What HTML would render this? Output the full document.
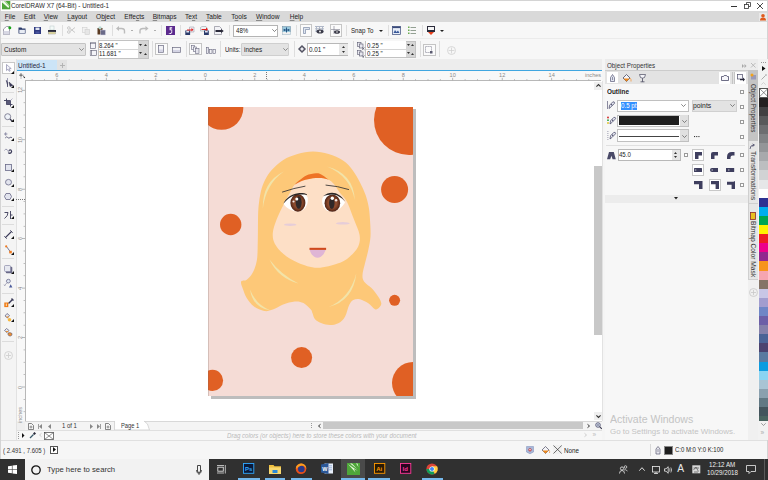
<!DOCTYPE html>
<html><head><meta charset="utf-8">
<style>
*{margin:0;padding:0;box-sizing:border-box}
html,body{width:768px;height:480px;overflow:hidden;background:#f0f0f0;font-family:"Liberation Sans",sans-serif;font-size:7px;color:#222;position:relative}
.a{position:absolute}
.t{position:absolute;white-space:nowrap;line-height:1}
svg{position:absolute;overflow:visible}
</style></head><body>
<div class="a" style="left:0px;top:0px;width:768px;height:11px;background:#fff;"></div>
<div class="a" style="left:0px;top:0px;width:768px;height:1px;background:#d4d4d4;"></div>
<div class="a" style="left:0px;top:0px;width:1px;height:459px;background:#d4d4d4;"></div>
<div class="a" style="left:767px;top:0px;width:1px;height:459px;background:#d4d4d4;"></div>
<svg style="left:1.7px;top:1.4px;" width="8.3" height="8.3" viewBox="0 0 8.3 8.3"><rect width="8.3" height="8.3" fill="#4ea63a"/><path d="M0,0 H2.2 L7.2,5.4 L6.4,7 L0.2,1.6Z" fill="#f2faee"/><path d="M2.4,0 H3.6 L7.6,4.4 L7.2,5.2Z" fill="#b8e0a8"/></svg>
<div class="t" style="left:11px;top:3.0px;font-size:6.5px;color:#2a2a2a;;transform:scaleX(0.964);transform-origin:0 0">CorelDRAW X7 (64-Bit) - Untitled-1</div>
<div class="a" style="left:731px;top:6px;width:6px;height:1px;background:#333;"></div>
<svg style="left:744px;top:2px;" width="7" height="7" viewBox="0 0 7 7"><rect x="0.5" y="2.5" width="4" height="4" fill="none" stroke="#333" stroke-width="0.8"/><path d="M2.5,2.5 V0.5 H6.5 V4.5 H4.5" fill="none" stroke="#333" stroke-width="0.8"/></svg>
<svg style="left:757px;top:2.5px;" width="6" height="6" viewBox="0 0 6 6"><path d="M0,0 L6,6 M6,0 L0,6" stroke="#333" stroke-width="0.9"/></svg>
<div class="a" style="left:1px;top:11px;width:766px;height:11px;background:#d9d9d9;"></div>
<div class="t" style="left:4.7px;top:13.9px;font-size:6.6px;color:#222;"><u style="text-decoration-thickness:0.5px;text-underline-offset:0.8px;text-decoration-color:#8a8a8a">F</u>ile</div>
<div class="t" style="left:24px;top:13.9px;font-size:6.6px;color:#222;"><u style="text-decoration-thickness:0.5px;text-underline-offset:0.8px;text-decoration-color:#8a8a8a">E</u>dit</div>
<div class="t" style="left:43.7px;top:13.9px;font-size:6.6px;color:#222;"><u style="text-decoration-thickness:0.5px;text-underline-offset:0.8px;text-decoration-color:#8a8a8a">V</u>iew</div>
<div class="t" style="left:67.3px;top:13.9px;font-size:6.6px;color:#222;"><u style="text-decoration-thickness:0.5px;text-underline-offset:0.8px;text-decoration-color:#8a8a8a">L</u>ayout</div>
<div class="t" style="left:96px;top:13.9px;font-size:6.6px;color:#222;">O<u style="text-decoration-thickness:0.5px;text-underline-offset:0.8px;text-decoration-color:#8a8a8a">b</u>ject</div>
<div class="t" style="left:124.3px;top:13.9px;font-size:6.6px;color:#222;">Effe<u style="text-decoration-thickness:0.5px;text-underline-offset:0.8px;text-decoration-color:#8a8a8a">c</u>ts</div>
<div class="t" style="left:152.7px;top:13.9px;font-size:6.6px;color:#222;"><u style="text-decoration-thickness:0.5px;text-underline-offset:0.8px;text-decoration-color:#8a8a8a">B</u>itmaps</div>
<div class="t" style="left:185px;top:13.9px;font-size:6.6px;color:#222;">Te<u style="text-decoration-thickness:0.5px;text-underline-offset:0.8px;text-decoration-color:#8a8a8a">x</u>t</div>
<div class="t" style="left:206px;top:13.9px;font-size:6.6px;color:#222;"><u style="text-decoration-thickness:0.5px;text-underline-offset:0.8px;text-decoration-color:#8a8a8a">T</u>able</div>
<div class="t" style="left:231.3px;top:13.9px;font-size:6.6px;color:#222;">T<u style="text-decoration-thickness:0.5px;text-underline-offset:0.8px;text-decoration-color:#8a8a8a">o</u>ols</div>
<div class="t" style="left:256px;top:13.9px;font-size:6.6px;color:#222;"><u style="text-decoration-thickness:0.5px;text-underline-offset:0.8px;text-decoration-color:#8a8a8a">W</u>indow</div>
<div class="t" style="left:289.7px;top:13.9px;font-size:6.6px;color:#222;"><u style="text-decoration-thickness:0.5px;text-underline-offset:0.8px;text-decoration-color:#8a8a8a">H</u>elp</div>
<svg style="left:759px;top:13px;" width="8" height="8" viewBox="0 0 8 8"><rect width="8" height="8" fill="#e8e8e8"/><circle cx="4" cy="2.8" r="1.8" fill="#e05a1c"/><path d="M1,7.5 Q1,4.6 4,4.6 Q7,4.6 7,7.5Z" fill="#e05a1c"/></svg>
<div class="a" style="left:1px;top:22px;width:766px;height:16px;background:#f7f7f7;"></div>
<div class="a" style="left:1px;top:38px;width:766px;height:0.8px;background:#ebebeb;"></div>
<svg style="left:3px;top:26px;" width="8" height="9" viewBox="0 0 8 9"><path d="M0.5,3 L3.5,0.5 H6.5 V8.5 H0.5Z" fill="#fff" stroke="#8a8a9a" stroke-width="0.8"/><rect x="0.5" y="5" width="6" height="3.5" fill="#d8d8e4"/><circle cx="6.8" cy="1.8" r="1.5" fill="#1aa31a"/></svg>
<svg style="left:18px;top:27px;" width="8" height="7" viewBox="0 0 8 7"><path d="M0.5,0.5 H3.5 L4.2,1.5 H7.5 V6.5 H0.5Z" fill="#2a3a6a"/><rect x="1.3" y="2.8" width="5.6" height="3.2" fill="#e8ecf4"/></svg>
<svg style="left:34px;top:27px;" width="7" height="7" viewBox="0 0 7 7"><rect x="0" y="0" width="7" height="7" fill="#2f3a80"/><rect x="1.5" y="0.6" width="4" height="2.4" fill="#dfe3f0"/><rect x="1.5" y="4.5" width="4" height="2" fill="#4a56a0"/></svg>
<svg style="left:48px;top:26px;" width="8" height="8" viewBox="0 0 8 8"><rect x="2" y="0" width="4" height="4" fill="#f4faf8" stroke="#b8c8c8" stroke-width="0.5"/><rect x="0" y="4" width="8" height="2" fill="#2a2a3a"/><rect x="0.5" y="6" width="7" height="2" fill="#e8e0a0" stroke="#8a8a8a" stroke-width="0.4"/></svg>
<div class="a" style="left:62px;top:25px;width:1px;height:11px;background:#dedede;"></div>
<svg style="left:67px;top:26px;" width="8" height="8" viewBox="0 0 8 8"><g fill="none" stroke="#c4c4c4" stroke-width="0.9"><circle cx="1.8" cy="6" r="1.3"/><circle cx="1.8" cy="2" r="1.3"/><path d="M3,2.6 L8,6.5 M3,5.4 L8,1.5"/></g></svg>
<svg style="left:82px;top:27px;" width="8" height="8" viewBox="0 0 8 8"><rect x="0.5" y="0.5" width="4.5" height="5" fill="#f2f2f2" stroke="#cfcfcf" stroke-width="0.6"/><rect x="3" y="2.5" width="4.5" height="5" fill="#e6e6e6" stroke="#cfcfcf" stroke-width="0.6"/></svg>
<svg style="left:97px;top:26px;" width="9" height="9" viewBox="0 0 9 9"><rect x="0.5" y="2" width="5" height="6.5" fill="#5a3a22"/><circle cx="3" cy="1.8" r="1.6" fill="#b8d8d0"/><rect x="3.5" y="4" width="5" height="5" fill="#6a6a88" stroke="#dcdcec" stroke-width="0.5"/></svg>
<div class="a" style="left:112px;top:25px;width:1px;height:11px;background:#dedede;"></div>
<svg style="left:116px;top:26px;" width="10" height="8" viewBox="0 0 10 8"><path d="M8.5,7.5 V5 Q8.5,2.5 5.5,2.5 H2" fill="none" stroke="#bcbcbc" stroke-width="1.4"/><path d="M0,2.5 L3,0 V5Z" fill="#bcbcbc"/></svg>
<div class="a" style="left:130.5px;top:29.5px;width:2px;height:1px;background:#b0b0b0;"></div>
<svg style="left:139px;top:26px;" width="10" height="8" viewBox="0 0 10 8"><path d="M1,7.5 V5 Q1,2.5 4,2.5 H7.5" fill="none" stroke="#bcbcbc" stroke-width="1.4"/><path d="M9.5,2.5 L6.5,0 V5Z" fill="#bcbcbc"/></svg>
<div class="a" style="left:153.5px;top:29.5px;width:2px;height:1px;background:#b0b0b0;"></div>
<div class="a" style="left:161px;top:25px;width:1px;height:11px;background:#dedede;"></div>
<svg style="left:166px;top:26px;" width="9" height="9" viewBox="0 0 9 9"><rect width="9" height="9" fill="#5c2a8e"/><path d="M6.2,1.2 H3.6 V4.2 H5.4 V6.6 L2.2,8 H4.8 L6.2,6.8 V3.4 H4.6 V2.4 H6.2Z" fill="#fff"/></svg>
<div class="a" style="left:180px;top:25px;width:1px;height:11px;background:#dedede;"></div>
<svg style="left:185px;top:26px;" width="10" height="9" viewBox="0 0 10 9"><path d="M4.5,1 H9 V6 H4.5Z" fill="#f0f0f4" stroke="#9090a0" stroke-width="0.5"/><rect x="0.3" y="4.5" width="4.8" height="4.5" fill="#2a3a6a"/><rect x="1.3" y="5" width="2.8" height="1.5" fill="#dfe3f0"/><path d="M2,3.5 H6.5 V2 L8.5,3.8 L6.5,5.6 V4.5 H2Z" fill="#e02020"/></svg>
<svg style="left:200px;top:26px;" width="9" height="9" viewBox="0 0 9 9"><path d="M0.5,1.5 L2,0.5 H6 L7,2 V5 H0.5Z" fill="#eef2f4" stroke="#8a9aa0" stroke-width="0.5"/><rect x="4" y="4.5" width="4.8" height="4.5" fill="#2a3a6a"/><rect x="5" y="5" width="2.8" height="1.5" fill="#dfe3f0"/><path d="M1.5,3 H6 V1.5 L8,3.3 L6,5.1 V4 H1.5Z" fill="#e02020"/></svg>
<svg style="left:214px;top:26px;" width="10" height="9" viewBox="0 0 10 9"><path d="M0.5,0.5 H5.5 L7.5,2.5 V8.5 H0.5Z" fill="#f2f2f6" stroke="#7a7a8a" stroke-width="0.6"/><path d="M1.5,4 H7 V3 L9.8,5 L7,7 V6 H1.5Z" fill="#2a2a3a"/></svg>
<div class="a" style="left:228.5px;top:25px;width:1px;height:11px;background:#dedede;"></div>
<div class="a" style="left:233px;top:24.5px;width:45px;height:12px;background:#fff;border:1px solid #b4b4b4"></div>
<div class="t" style="left:236px;top:27.8px;font-size:6.6px;color:#222;;transform:scaleX(0.924);transform-origin:0 0">48%</div>
<svg style="left:271.5px;top:28.5px;" width="5" height="3" viewBox="0 0 5 3"><path d="M0.3,0.3 L2.5,2.5 L4.7,0.3" fill="none" stroke="#555" stroke-width="0.7"/></svg>
<svg style="left:282px;top:26px;" width="9" height="9" viewBox="0 0 9 9"><rect x="0.5" y="0.5" width="8" height="8" fill="#9ac8dc" stroke="#6a8aa0" stroke-width="0.5"/><rect x="0.5" y="6" width="8" height="2.5" fill="#f0f0f0"/><path d="M1.5,4 H7.5 M4.5,1.5 V6.5" stroke="#1a4a7a" stroke-width="0.9"/><path d="M1.5,4 L3,3 V5Z M7.5,4 L6,3 V5Z" fill="#1a4a7a"/></svg>
<div class="a" style="left:296px;top:25px;width:1px;height:11px;background:#dedede;"></div>
<div class="a" style="left:300px;top:24px;width:12px;height:12.5px;background:#fbfbfb;border:1px solid #c6c6c6"></div>
<svg style="left:302.5px;top:26.5px;" width="7" height="7" viewBox="0 0 7 7"><path d="M0.5,6.5 V0.5 H6.5 V2.5 H2.5 V6.5Z" fill="#dfe6f0" stroke="#6a7a9a" stroke-width="0.6"/></svg>
<svg style="left:315px;top:26px;" width="10" height="9" viewBox="0 0 10 9"><g fill="#b0b8c8"><rect x="0" y="0" width="9" height="1"/><rect x="0" y="2.3" width="9" height="1"/><rect x="0" y="4.6" width="9" height="1"/><rect x="1" y="0" width="1" height="6"/><rect x="4" y="0" width="1" height="6"/><rect x="7" y="0" width="1" height="6"/></g><ellipse cx="5" cy="5.5" rx="3.5" ry="2" fill="#3a3a48"/><circle cx="5" cy="5.5" r="1" fill="#eee"/></svg>
<div class="a" style="left:329.5px;top:24px;width:12.5px;height:12.5px;background:#fbfbfb;border:1px solid #c6c6c6"></div>
<svg style="left:331px;top:26px;" width="10" height="9" viewBox="0 0 10 9"><path d="M3,0 V8 M0,3.5 H9" stroke="#7a7a8a" stroke-width="0.6"/><ellipse cx="6" cy="6" rx="3" ry="1.8" fill="#3a3a48"/><circle cx="6" cy="6" r="0.8" fill="#eee"/></svg>
<div class="a" style="left:345.5px;top:25px;width:1px;height:11px;background:#dedede;"></div>
<div class="t" style="left:350.6px;top:27.8px;font-size:6.6px;color:#222;;transform:scaleX(0.934);transform-origin:0 0">Snap To</div>
<svg style="left:378.5px;top:29.5px;" width="4" height="2" viewBox="0 0 4 2"><path d="M0,0 H4 L2,2Z" fill="#222"/></svg>
<div class="a" style="left:387.5px;top:25px;width:1px;height:11px;background:#dedede;"></div>
<svg style="left:392px;top:26px;" width="9" height="9" viewBox="0 0 9 9"><rect x="0.5" y="0.5" width="8" height="8" fill="#e8eef8" stroke="#3a4a7a" stroke-width="0.7"/><rect x="0.5" y="0.5" width="8" height="1.6" fill="#3a4a7a"/><path d="M1.5,7 L3,4 L4.5,6 L6,4.5 L7.5,7Z" fill="#3a5a9a"/></svg>
<svg style="left:408px;top:26px;" width="8" height="9" viewBox="0 0 8 9"><g fill="#6aaa50"><rect x="0" y="0.5" width="1.5" height="1.5"/><rect x="0" y="3.5" width="1.5" height="1.5"/><rect x="0" y="6.5" width="1.5" height="1.5"/></g><g fill="#7a8a7a"><rect x="2.5" y="1" width="5.5" height="0.8"/><rect x="2.5" y="4" width="5.5" height="0.8"/><rect x="2.5" y="7" width="5.5" height="0.8"/></g></svg>
<div class="a" style="left:421.5px;top:25px;width:1px;height:11px;background:#dedede;"></div>
<svg style="left:427px;top:26px;" width="8" height="9" viewBox="0 0 8 9"><rect x="0" y="0" width="8" height="6" fill="#2a2a3a"/><rect x="1" y="1" width="6" height="3" fill="#f4f4f4"/><path d="M1,6 L4,9 L7,6Z" fill="#e8401a"/></svg>
<svg style="left:439.5px;top:29.5px;" width="4" height="2" viewBox="0 0 4 2"><path d="M0,0 H4 L2,2Z" fill="#222"/></svg>
<div class="a" style="left:1px;top:39px;width:766px;height:20px;background:#f7f7f7;"></div>
<div class="a" style="left:1.2px;top:43px;width:84.4px;height:12.6px;background:#e3e3e3;border:1px solid #c4c4c4;border-radius:1px"></div>
<div class="t" style="left:3.5px;top:46.8px;font-size:6.6px;color:#222;;transform:scaleX(0.981);transform-origin:0 0">Custom</div>
<svg style="left:78.5px;top:48px;" width="5" height="3" viewBox="0 0 5 3"><path d="M0.3,0.3 L2.5,2.5 L4.7,0.3" fill="none" stroke="#666" stroke-width="0.7"/></svg>
<svg style="left:90px;top:41.5px;" width="6" height="7" viewBox="0 0 6 7"><rect x="0.5" y="1.2" width="5" height="5.3" fill="#f4f4f8" stroke="#5a5a70" stroke-width="0.6"/><path d="M0.5,0.3 V1.5 M5.5,0.3 V1.5 M0.5,0.6 H5.5" stroke="#5a5a70" stroke-width="0.5"/></svg>
<svg style="left:89.5px;top:50.3px;" width="7" height="6" viewBox="0 0 7 6"><rect x="1.5" y="0.5" width="5" height="5" fill="#f4f4f8" stroke="#5a5a70" stroke-width="0.6"/><path d="M0.4,0.5 V5.5 M0,0.5 H1 M0,5.5 H1" stroke="#5a5a70" stroke-width="0.5"/></svg>
<div class="a" style="left:97.5px;top:40.3px;width:51px;height:18.3px;background:#d6d6d6;border:1px solid #c2c2c2"></div>
<div class="a" style="left:98.5px;top:41.0px;width:39.5px;height:8.1px;background:#fff;"></div>
<div class="t" style="left:99.1px;top:42.7px;font-size:6.8px;color:#222;;transform:scaleX(0.875);transform-origin:0 0">8.264 "</div>
<svg style="left:139.2px;top:43.7px;" width="3" height="2" viewBox="0 0 3 2"><path d="M0,0 H3 L1.5,2Z" fill="#333"/></svg>
<svg style="left:143.7px;top:43.9px;" width="3" height="2" viewBox="0 0 3 2"><path d="M0,2 H3 L1.5,0Z" fill="#333"/></svg>
<div class="a" style="left:98.5px;top:49.7px;width:39.5px;height:8.1px;background:#fff;"></div>
<div class="t" style="left:99.1px;top:51.400000000000006px;font-size:6.8px;color:#222;;transform:scaleX(0.878);transform-origin:0 0">11.681 "</div>
<svg style="left:139.2px;top:52.400000000000006px;" width="3" height="2" viewBox="0 0 3 2"><path d="M0,0 H3 L1.5,2Z" fill="#333"/></svg>
<svg style="left:143.7px;top:52.6px;" width="3" height="2" viewBox="0 0 3 2"><path d="M0,2 H3 L1.5,0Z" fill="#333"/></svg>
<div class="a" style="left:151.5px;top:41px;width:1px;height:16px;background:#dedede;"></div>
<div class="a" style="left:155px;top:43.2px;width:12.5px;height:12.3px;background:#fbfbfb;border:1px solid #c4c4c4"></div>
<svg style="left:158px;top:45px;" width="6" height="8" viewBox="0 0 6 8"><rect x="0.5" y="0.5" width="5" height="7" fill="#f2f2f6" stroke="#6a6a80" stroke-width="0.7"/><rect x="1" y="4.5" width="4" height="2.6" fill="#d4d4e4"/></svg>
<svg style="left:171.5px;top:47px;" width="9" height="6" viewBox="0 0 9 6"><rect x="0.5" y="0.5" width="8" height="5" fill="#f2f2f6" stroke="#6a6a80" stroke-width="0.7"/><rect x="1" y="3" width="7" height="2.1" fill="#d4d4e4"/></svg>
<div class="a" style="left:185.5px;top:41px;width:1px;height:16px;background:#dedede;"></div>
<div class="a" style="left:189px;top:43.2px;width:12.5px;height:12.3px;background:#fbfbfb;border:1px solid #c4c4c4"></div>
<svg style="left:191px;top:44.5px;" width="9" height="9" viewBox="0 0 9 9"><rect x="0.5" y="0.5" width="3" height="4" fill="#f2f2f6" stroke="#6a6a80" stroke-width="0.6"/><rect x="2.5" y="2" width="3" height="4.5" fill="#f2f2f6" stroke="#6a6a80" stroke-width="0.6"/><rect x="4.5" y="3.5" width="3.5" height="5" fill="#e4e4ec" stroke="#6a6a80" stroke-width="0.6"/></svg>
<svg style="left:205.5px;top:46.5px;" width="10" height="7" viewBox="0 0 10 7"><rect x="0.5" y="0.5" width="2" height="6" fill="#e4e4ec" stroke="#6a6a80" stroke-width="0.6"/><rect x="3.5" y="2.5" width="2.5" height="4" fill="#f2f2f6" stroke="#6a6a80" stroke-width="0.6"/><rect x="7" y="2.5" width="2.5" height="4" fill="#f2f2f6" stroke="#6a6a80" stroke-width="0.6"/></svg>
<div class="a" style="left:220px;top:41px;width:1px;height:16px;background:#dedede;"></div>
<div class="t" style="left:224.6px;top:46.8px;font-size:6.6px;color:#222;;transform:scaleX(0.907);transform-origin:0 0">Units:</div>
<div class="a" style="left:241.4px;top:43px;width:48.1px;height:12.6px;background:#e3e3e3;border:1px solid #cfcfcf;border-radius:1px"></div>
<div class="t" style="left:243.8px;top:46.8px;font-size:6.6px;color:#222;;transform:scaleX(0.959);transform-origin:0 0">inches</div>
<svg style="left:283px;top:48px;" width="5" height="3" viewBox="0 0 5 3"><path d="M0.3,0.3 L2.5,2.5 L4.7,0.3" fill="none" stroke="#666" stroke-width="0.7"/></svg>
<div class="a" style="left:293.5px;top:41px;width:1px;height:16px;background:#dedede;"></div>
<svg style="left:297.5px;top:45px;" width="8" height="8" viewBox="0 0 8 8"><path d="M4,0 L8,4 L4,8 L0,4Z" fill="#4a4a5a"/><path d="M4,2 L6,4 L4,6 L2,4Z" fill="#ececf0"/><path d="M4,1.2 V2.4 M4,5.6 V6.8 M1.2,4 H2.4 M5.6,4 H6.8" stroke="#8a8a9a" stroke-width="0.5"/></svg>
<div class="a" style="left:307.2px;top:43px;width:41.3px;height:12.5px;background:#fff;border:1px solid #b8b8b8"></div>
<div class="a" style="left:339px;top:44px;width:8.5px;height:10.5px;background:#e8e8e8;"></div>
<div class="t" style="left:308.6px;top:46.8px;font-size:6.6px;color:#222;;transform:scaleX(0.963);transform-origin:0 0">0.01 "</div>
<svg style="left:341.8px;top:45.8px;" width="3" height="2" viewBox="0 0 3 2"><path d="M0,2 H3 L1.5,0Z" fill="#333"/></svg>
<svg style="left:341.8px;top:50.8px;" width="3" height="2" viewBox="0 0 3 2"><path d="M0,0 H3 L1.5,2Z" fill="#333"/></svg>
<div class="a" style="left:352.5px;top:41px;width:1px;height:16px;background:#dedede;"></div>
<svg style="left:356.5px;top:41.5px;" width="8" height="8" viewBox="0 0 8 8"><rect x="0.5" y="0.5" width="3.5" height="4" fill="#e8e8f0" stroke="#5a5a70" stroke-width="0.6"/><rect x="2.5" y="2" width="3.5" height="4" fill="#e8e8f0" stroke="#5a5a70" stroke-width="0.6"/><path d="M5,5.5 L7.5,7.8 M7.5,5.5 L5,7.8" stroke="#3a3a50" stroke-width="0.6"/></svg>
<svg style="left:356.5px;top:50px;" width="8" height="8" viewBox="0 0 8 8"><rect x="0.5" y="0.5" width="3.5" height="4" fill="#e8e8f0" stroke="#5a5a70" stroke-width="0.6"/><rect x="2.5" y="2" width="3.5" height="4" fill="#e8e8f0" stroke="#5a5a70" stroke-width="0.6"/><path d="M5,5.5 L6.2,6.8 L7.5,5.5 M6.2,6.8 V8" stroke="#3a3a50" stroke-width="0.6" fill="none"/></svg>
<div class="a" style="left:365px;top:40.6px;width:51px;height:17.7px;background:#d6d6d6;border:1px solid #c2c2c2"></div>
<div class="a" style="left:366px;top:41.300000000000004px;width:39.5px;height:7.799999999999999px;background:#fff;"></div>
<div class="t" style="left:366.6px;top:43.00000000000001px;font-size:6.8px;color:#222;;transform:scaleX(0.895);transform-origin:0 0">0.25 "</div>
<svg style="left:406.7px;top:44.00000000000001px;" width="3" height="2" viewBox="0 0 3 2"><path d="M0,0 H3 L1.5,2Z" fill="#333"/></svg>
<svg style="left:411.2px;top:44.2px;" width="3" height="2" viewBox="0 0 3 2"><path d="M0,2 H3 L1.5,0Z" fill="#333"/></svg>
<div class="a" style="left:366px;top:49.7px;width:39.5px;height:7.799999999999999px;background:#fff;"></div>
<div class="t" style="left:366.6px;top:51.400000000000006px;font-size:6.8px;color:#222;;transform:scaleX(0.895);transform-origin:0 0">0.25 "</div>
<svg style="left:406.7px;top:52.400000000000006px;" width="3" height="2" viewBox="0 0 3 2"><path d="M0,0 H3 L1.5,2Z" fill="#333"/></svg>
<svg style="left:411.2px;top:52.6px;" width="3" height="2" viewBox="0 0 3 2"><path d="M0,2 H3 L1.5,0Z" fill="#333"/></svg>
<div class="a" style="left:420px;top:41px;width:1px;height:16px;background:#dedede;"></div>
<div class="a" style="left:422.5px;top:43.5px;width:13px;height:12.5px;background:#fbfbfb;border:1px solid #c4c4c4"></div>
<svg style="left:425px;top:45.5px;" width="8" height="8" viewBox="0 0 8 8"><rect x="0.5" y="0.5" width="6" height="6" fill="none" stroke="#5a5a70" stroke-width="0.6" stroke-dasharray="1.2 0.8"/><rect x="5" y="5" width="2.5" height="2.5" fill="#5a5a70"/></svg>
<div class="a" style="left:439px;top:41px;width:1px;height:16px;background:#dedede;"></div>
<svg style="left:447px;top:45.5px;" width="9" height="9" viewBox="0 0 9 9"><circle cx="4.5" cy="4.5" r="4" fill="none" stroke="#d0d0d0" stroke-width="0.8"/><path d="M4.5,1.5 V7.5 M1.5,4.5 H7.5" stroke="#d0d0d0" stroke-width="0.8"/></svg>
<div class="a" style="left:1px;top:59px;width:766px;height:381px;background:#efefef;"></div>
<div class="a" style="left:1px;top:59px;width:15px;height:381px;background:#f4f4f4;"></div>
<div class="a" style="left:15.5px;top:59px;width:1px;height:381px;background:#e2e2e2;"></div>
<div class="a" style="left:2px;top:62.2px;width:12.5px;height:11.5px;background:#fff;border:1px solid #c8c8c8"></div>
<svg style="left:5.5px;top:64px;" width="6" height="7.5" viewBox="0 0 6 7.5"><path d="M0.5,0.5 L5.2,4.6 L3,4.8 L4.2,7 L3.2,7.3 L2,5.2 L0.5,6.6Z" fill="#f4f4fa" stroke="#8a8aaa" stroke-width="0.7"/></svg>
<svg style="left:11px;top:70.5px;" width="3" height="3" viewBox="0 0 3 3"><path d="M0,3 H3 V0Z" fill="#111"/></svg>
<svg style="left:4.5px;top:78px;" width="9" height="10" viewBox="0 0 9 10"><path d="M2.5,0 V9" stroke="#8a8aa8" stroke-width="0.8"/><path d="M1,2 Q3.5,4 2.5,9 M4,4 L8,7.5 L5,8.5Z" fill="#3a3a58" stroke="#3a3a58" stroke-width="0.5"/></svg>
<svg style="left:11px;top:85px;" width="3" height="3" viewBox="0 0 3 3"><path d="M0,3 H3 V0Z" fill="#111"/></svg>
<div class="a" style="left:2px;top:92px;width:12px;height:1px;background:#dcdcdc;"></div>
<svg style="left:4px;top:98px;" width="9" height="9" viewBox="0 0 9 9"><path d="M2.5,0.5 V6.5 H8.5 M0,2.5 H6.5 V8.5" fill="none" stroke="#3a3a58" stroke-width="0.9"/><path d="M3,6 L8.5,0.5" stroke="#8a8aa8" stroke-width="0.6"/><rect x="2.5" y="2.5" width="4" height="4" fill="#5a5a78"/></svg>
<svg style="left:11px;top:104.5px;" width="3" height="3" viewBox="0 0 3 3"><path d="M0,3 H3 V0Z" fill="#111"/></svg>
<svg style="left:4px;top:113px;" width="9" height="9" viewBox="0 0 9 9"><circle cx="3.7" cy="3.7" r="3" fill="#eef2f8" stroke="#7a7a90" stroke-width="0.9"/><path d="M6,6 L8.5,8.5" stroke="#3a3a50" stroke-width="1.3"/></svg>
<svg style="left:11px;top:119px;" width="3" height="3" viewBox="0 0 3 3"><path d="M0,3 H3 V0Z" fill="#111"/></svg>
<div class="a" style="left:2px;top:126px;width:12px;height:1px;background:#dcdcdc;"></div>
<svg style="left:4px;top:132px;" width="9" height="9" viewBox="0 0 9 9"><path d="M0,2 H3.4 M1.7,0.3 V3.7" stroke="#7a7a98" stroke-width="0.8"/><path d="M1.2,6 Q2.5,4 3.8,5.5 Q5,7 6,5.5 Q7,4.5 8,5.8" fill="none" stroke="#5a5a78" stroke-width="0.9"/></svg>
<svg style="left:11px;top:138px;" width="3" height="3" viewBox="0 0 3 3"><path d="M0,3 H3 V0Z" fill="#111"/></svg>
<svg style="left:4px;top:148px;" width="9" height="6.5" viewBox="0 0 9 6.5"><path d="M0.5,2.5 Q1.5,0.5 3,1.5 Q4,2.5 4.5,4" fill="none" stroke="#7a7a98" stroke-width="0.7"/><path d="M4.5,2.5 Q6,0.5 7.5,1.8 Q9,3.5 7.5,5.3 Q5.5,6.8 3.8,5 L4.6,4.2 Q6,5 6.8,4 Q7.4,3 6.5,2.6 Q5.5,2.3 5.2,3.4Z" fill="#3a3a58"/></svg>
<svg style="left:4.5px;top:163.5px;" width="7" height="7" viewBox="0 0 7 7"><rect x="0.5" y="0.5" width="6" height="6" fill="#e2e4ee" stroke="#6a6a88" stroke-width="0.8"/></svg>
<svg style="left:11px;top:168.5px;" width="3" height="3" viewBox="0 0 3 3"><path d="M0,3 H3 V0Z" fill="#111"/></svg>
<svg style="left:4.5px;top:179px;" width="7" height="7" viewBox="0 0 7 7"><ellipse cx="3.5" cy="3.2" rx="3" ry="2.8" fill="#e2e4ee" stroke="#6a6a88" stroke-width="0.8"/></svg>
<svg style="left:11px;top:184px;" width="3" height="3" viewBox="0 0 3 3"><path d="M0,3 H3 V0Z" fill="#111"/></svg>
<svg style="left:4px;top:192.5px;" width="8" height="7" viewBox="0 0 8 7"><path d="M2,0.5 H6 L7.5,3.5 L6,6.5 H2 L0.5,3.5Z" fill="#e2e4ee" stroke="#6a6a88" stroke-width="0.8"/></svg>
<svg style="left:11px;top:197.5px;" width="3" height="3" viewBox="0 0 3 3"><path d="M0,3 H3 V0Z" fill="#111"/></svg>
<div class="a" style="left:2px;top:205.8px;width:12px;height:1px;background:#dcdcdc;"></div>
<svg style="left:4px;top:210.5px;" width="9" height="9" viewBox="0 0 9 9"><path d="M0.5,1.5 H4 Q4,5 0.5,7.5 M6.5,0 V8 M6.5,4 H8.5" fill="none" stroke="#3a3a58" stroke-width="0.9"/></svg>
<svg style="left:11px;top:216px;" width="3" height="3" viewBox="0 0 3 3"><path d="M0,3 H3 V0Z" fill="#111"/></svg>
<div class="a" style="left:2px;top:224px;width:12px;height:1px;background:#dcdcdc;"></div>
<svg style="left:4px;top:230px;" width="9" height="9" viewBox="0 0 9 9"><path d="M1.5,7.5 L7.5,1.5" stroke="#3a3a58" stroke-width="1.1"/><path d="M0.3,6.3 L2.7,8.7 M6.3,0.3 L8.7,2.7" stroke="#3a3a58" stroke-width="0.9"/></svg>
<svg style="left:11px;top:236px;" width="3" height="3" viewBox="0 0 3 3"><path d="M0,3 H3 V0Z" fill="#111"/></svg>
<svg style="left:4px;top:245px;" width="9" height="10" viewBox="0 0 9 10"><path d="M2.5,1.5 L6.5,7" stroke="#5a5a78" stroke-width="0.8"/><circle cx="2.2" cy="1.4" r="1.1" fill="#f07a20"/><rect x="5.2" y="5.8" width="2.6" height="2.6" fill="#f07a20"/></svg>
<svg style="left:11px;top:252px;" width="3" height="3" viewBox="0 0 3 3"><path d="M0,3 H3 V0Z" fill="#111"/></svg>
<div class="a" style="left:2px;top:257.8px;width:12px;height:1px;background:#dcdcdc;"></div>
<svg style="left:4px;top:265px;" width="9" height="9" viewBox="0 0 9 9"><rect x="1.8" y="1.8" width="6.5" height="6.5" rx="1" fill="#6a6a88"/><rect x="0.5" y="0.5" width="6" height="6" rx="1" fill="#e6e8f0" stroke="#8a8aa8" stroke-width="0.7"/></svg>
<svg style="left:11px;top:271px;" width="3" height="3" viewBox="0 0 3 3"><path d="M0,3 H3 V0Z" fill="#111"/></svg>
<svg style="left:4px;top:279px;" width="9" height="9" viewBox="0 0 9 9"><path d="M4.5,0.3 Q6.5,0.3 6.3,2.3 Q6,4 4.3,4 Q2.6,4 2.4,2.3 Q2.4,0.3 4.5,0.3Z" fill="#dfe6f2" stroke="#5a5a80" stroke-width="0.7"/><path d="M3,3.8 L0.4,6.6 M0,5.6 L1.4,7" stroke="#7a7a98" stroke-width="0.6"/><path d="M5,8.5 L6.7,5.2 L8.4,8.5Z" fill="#4a5a9a"/></svg>
<div class="a" style="left:2px;top:293px;width:12px;height:1px;background:#dcdcdc;"></div>
<svg style="left:3.5px;top:297.5px;" width="10" height="10" viewBox="0 0 10 10"><path d="M4.5,5.5 L8.5,1.5" stroke="#3a3a58" stroke-width="1.5"/><path d="M7.5,0.5 L9.5,2.5" stroke="#3a3a58" stroke-width="1.2"/><rect x="0.3" y="4.5" width="4" height="4.6" fill="#f07a10"/><rect x="1.8" y="5.5" width="1" height="2.6" fill="#fde0c0"/></svg>
<svg style="left:11px;top:304px;" width="3" height="3" viewBox="0 0 3 3"><path d="M0,3 H3 V0Z" fill="#111"/></svg>
<svg style="left:4px;top:313px;" width="9" height="9" viewBox="0 0 9 9"><path d="M3,0.5 L5.5,2.5 L3.5,5 L1,3Z" fill="#e6e8f0" stroke="#5a5a78" stroke-width="0.7"/><path d="M2,3.5 H5 L3.5,5Z" fill="#f08a20"/><circle cx="5.5" cy="6.8" r="1.8" fill="#f6b840"/></svg>
<svg style="left:11px;top:319px;" width="3" height="3" viewBox="0 0 3 3"><path d="M0,3 H3 V0Z" fill="#111"/></svg>
<svg style="left:4px;top:328px;" width="9" height="9" viewBox="0 0 9 9"><path d="M2.5,0.5 L5,2.5 L3,4.5 L0.5,2.5Z" fill="#e6e8f0" stroke="#5a5a78" stroke-width="0.7"/><path d="M1.5,3 H4.5 L3,4.5Z" fill="#f08a20"/><path d="M4,5 Q6,4 8,5.5 Q8.5,7.5 6.5,8 Q4.5,8.3 4,6.5Z" fill="#f09030" stroke="#5a5a78" stroke-width="0.6"/></svg>
<div class="a" style="left:2px;top:341.2px;width:12px;height:1px;background:#dcdcdc;"></div>
<svg style="left:3.5px;top:351px;" width="9" height="9" viewBox="0 0 9 9"><circle cx="4.5" cy="4.5" r="4" fill="none" stroke="#d0d0d0" stroke-width="0.9"/><path d="M4.5,1.8 V7.2 M1.8,4.5 H7.2" stroke="#d0d0d0" stroke-width="0.9"/></svg>
<div class="a" style="left:16.5px;top:59px;width:586px;height:11.5px;background:#ededed;"></div>
<div class="a" style="left:16.5px;top:60.4px;width:40.3px;height:10px;background:#cce4f7;"></div>
<div class="t" style="left:17.6px;top:63.0px;font-size:6.9px;color:#1e1e40;;transform:scaleX(0.938);transform-origin:0 0">Untitled-1</div>
<div class="a" style="left:57px;top:60.4px;width:10px;height:10px;background:#e2e2e2;"></div>
<svg style="left:59.5px;top:62.5px;" width="5" height="5" viewBox="0 0 5 5"><path d="M2.5,0 V5 M0,2.5 H5" stroke="#b0b0b0" stroke-width="0.9"/></svg>
<div class="a" style="left:16.5px;top:70px;width:586px;height:1px;background:#41a6e0;"></div>
<div class="a" style="left:16.5px;top:71px;width:585px;height:10px;background:#f8f8f8;"></div>
<div class="a" style="left:16.5px;top:71px;width:8.8px;height:350px;background:#f8f8f8;"></div>
<div class="a" style="left:25px;top:80.3px;width:576px;height:0.8px;background:#b8b8b8;"></div>
<div class="a" style="left:24.8px;top:80.3px;width:0.8px;height:341px;background:#b8b8b8;"></div>
<svg style="left:18.5px;top:73px;" width="7" height="7" viewBox="0 0 7 7"><path d="M0,2.2 H4.5 M2,0 V4.5" stroke="#555" stroke-width="0.7"/><path d="M2,5 V6" stroke="#999" stroke-width="0.6"/><path d="M4,3 L6.2,4.2 L5.2,5.2Z" fill="#111"/><circle cx="2" cy="2.2" r="0.9" fill="#777"/></svg>
<svg style="left:0;top:0" width="768" height="480"><g fill="#a8a8a8"><rect x="31.7" y="79.2" width="0.8" height="1.2"/><rect x="44.1" y="79.2" width="0.8" height="1.2"/><rect x="56.5" y="77.8" width="0.8" height="2.6"/><rect x="68.8" y="79.2" width="0.8" height="1.2"/><rect x="81.2" y="79.2" width="0.8" height="1.2"/><rect x="93.6" y="79.2" width="0.8" height="1.2"/><rect x="105.9" y="77.8" width="0.8" height="2.6"/><rect x="118.3" y="79.2" width="0.8" height="1.2"/><rect x="130.7" y="79.2" width="0.8" height="1.2"/><rect x="143.1" y="79.2" width="0.8" height="1.2"/><rect x="155.4" y="77.8" width="0.8" height="2.6"/><rect x="167.8" y="79.2" width="0.8" height="1.2"/><rect x="180.2" y="79.2" width="0.8" height="1.2"/><rect x="192.5" y="79.2" width="0.8" height="1.2"/><rect x="204.9" y="77.8" width="0.8" height="2.6"/><rect x="217.3" y="79.2" width="0.8" height="1.2"/><rect x="229.6" y="79.2" width="0.8" height="1.2"/><rect x="242.0" y="79.2" width="0.8" height="1.2"/><rect x="254.4" y="77.8" width="0.8" height="2.6"/><rect x="266.8" y="79.2" width="0.8" height="1.2"/><rect x="279.1" y="79.2" width="0.8" height="1.2"/><rect x="291.5" y="79.2" width="0.8" height="1.2"/><rect x="303.9" y="77.8" width="0.8" height="2.6"/><rect x="316.2" y="79.2" width="0.8" height="1.2"/><rect x="328.6" y="79.2" width="0.8" height="1.2"/><rect x="341.0" y="79.2" width="0.8" height="1.2"/><rect x="353.3" y="77.8" width="0.8" height="2.6"/><rect x="365.7" y="79.2" width="0.8" height="1.2"/><rect x="378.1" y="79.2" width="0.8" height="1.2"/><rect x="390.5" y="79.2" width="0.8" height="1.2"/><rect x="402.8" y="77.8" width="0.8" height="2.6"/><rect x="415.2" y="79.2" width="0.8" height="1.2"/><rect x="427.6" y="79.2" width="0.8" height="1.2"/><rect x="439.9" y="79.2" width="0.8" height="1.2"/><rect x="452.3" y="77.8" width="0.8" height="2.6"/><rect x="464.7" y="79.2" width="0.8" height="1.2"/><rect x="477.0" y="79.2" width="0.8" height="1.2"/><rect x="489.4" y="79.2" width="0.8" height="1.2"/><rect x="501.8" y="77.8" width="0.8" height="2.6"/><rect x="514.1" y="79.2" width="0.8" height="1.2"/><rect x="526.5" y="79.2" width="0.8" height="1.2"/><rect x="538.9" y="79.2" width="0.8" height="1.2"/><rect x="551.3" y="77.8" width="0.8" height="2.6"/><rect x="563.6" y="79.2" width="0.8" height="1.2"/><rect x="576.0" y="79.2" width="0.8" height="1.2"/><rect x="588.4" y="79.2" width="0.8" height="1.2"/><rect x="23.6" y="411.3" width="1.3" height="0.8"/><rect x="23.6" y="399.0" width="1.3" height="0.8"/><rect x="22" y="386.6" width="3" height="0.8"/><rect x="23.6" y="374.2" width="1.3" height="0.8"/><rect x="23.6" y="361.9" width="1.3" height="0.8"/><rect x="23.6" y="349.5" width="1.3" height="0.8"/><rect x="22" y="337.2" width="3" height="0.8"/><rect x="23.6" y="324.8" width="1.3" height="0.8"/><rect x="23.6" y="312.4" width="1.3" height="0.8"/><rect x="23.6" y="300.1" width="1.3" height="0.8"/><rect x="22" y="287.7" width="3" height="0.8"/><rect x="23.6" y="275.3" width="1.3" height="0.8"/><rect x="23.6" y="263.0" width="1.3" height="0.8"/><rect x="23.6" y="250.6" width="1.3" height="0.8"/><rect x="22" y="238.2" width="3" height="0.8"/><rect x="23.6" y="225.9" width="1.3" height="0.8"/><rect x="23.6" y="213.5" width="1.3" height="0.8"/><rect x="23.6" y="201.2" width="1.3" height="0.8"/><rect x="22" y="188.8" width="3" height="0.8"/><rect x="23.6" y="176.4" width="1.3" height="0.8"/><rect x="23.6" y="164.1" width="1.3" height="0.8"/><rect x="23.6" y="151.7" width="1.3" height="0.8"/><rect x="22" y="139.3" width="3" height="0.8"/><rect x="23.6" y="127.0" width="1.3" height="0.8"/><rect x="23.6" y="114.6" width="1.3" height="0.8"/><rect x="23.6" y="102.3" width="1.3" height="0.8"/><rect x="22" y="89.9" width="3" height="0.8"/></g></svg>
<div class="t" style="left:55.3px;top:73.2px;font-size:5.6px;color:#8a8a8a;">6</div>
<div class="t" style="left:104.8px;top:73.2px;font-size:5.6px;color:#8a8a8a;">4</div>
<div class="t" style="left:154.3px;top:73.2px;font-size:5.6px;color:#8a8a8a;">2</div>
<div class="t" style="left:203.8px;top:73.2px;font-size:5.6px;color:#8a8a8a;">0</div>
<div class="t" style="left:253.2px;top:73.2px;font-size:5.6px;color:#8a8a8a;">2</div>
<div class="t" style="left:302.7px;top:73.2px;font-size:5.6px;color:#8a8a8a;">4</div>
<div class="t" style="left:352.2px;top:73.2px;font-size:5.6px;color:#8a8a8a;">6</div>
<div class="t" style="left:401.7px;top:73.2px;font-size:5.6px;color:#8a8a8a;">8</div>
<div class="t" style="left:449.6px;top:73.2px;font-size:5.6px;color:#8a8a8a;">10</div>
<div class="t" style="left:499.1px;top:73.2px;font-size:5.6px;color:#8a8a8a;">12</div>
<div class="t" style="left:548.6px;top:73.2px;font-size:5.6px;color:#8a8a8a;">14</div>
<div class="t" style="left:585px;top:73.2px;font-size:5.6px;color:#8a8a8a;">inches</div>
<div class="t" style="left:17.8px;top:93.4px;font-size:5.6px;color:#8a8a8a;transform:rotate(-90deg);transform-origin:0 0">12</div>
<div class="t" style="left:17.8px;top:142.8px;font-size:5.6px;color:#8a8a8a;transform:rotate(-90deg);transform-origin:0 0">10</div>
<div class="t" style="left:17.8px;top:190.8px;font-size:5.6px;color:#8a8a8a;transform:rotate(-90deg);transform-origin:0 0">8</div>
<div class="t" style="left:17.8px;top:240.2px;font-size:5.6px;color:#8a8a8a;transform:rotate(-90deg);transform-origin:0 0">6</div>
<div class="t" style="left:17.8px;top:289.7px;font-size:5.6px;color:#8a8a8a;transform:rotate(-90deg);transform-origin:0 0">4</div>
<div class="t" style="left:17.8px;top:339.1px;font-size:5.6px;color:#8a8a8a;transform:rotate(-90deg);transform-origin:0 0">2</div>
<div class="t" style="left:17.8px;top:388.6px;font-size:5.6px;color:#8a8a8a;transform:rotate(-90deg);transform-origin:0 0">0</div>
<div class="t" style="left:18px;top:423px;font-size:5.6px;color:#8a8a8a;transform:rotate(-90deg);transform-origin:0 0">inches</div>
<svg style="left:266px;top:72px;" width="1" height="8" viewBox="0 0 1 8"><path d="M0.5,0 V8" stroke="#555" stroke-width="0.8" stroke-dasharray="1 1"/></svg>
<div class="a" style="left:25.6px;top:81.1px;width:577px;height:339.9px;background:#fff;"></div>
<div class="a" style="left:211px;top:109px;width:204.8px;height:289.5px;background:#bdbdbd;"></div>
<svg style="left:16px;top:199px;" width="9" height="1" viewBox="0 0 9 1"><path d="M0,0.5 H9" stroke="#555" stroke-width="0.8" stroke-dasharray="1 1"/></svg>
<div class="a" style="left:208px;top:107px;width:205px;height:289px;background:#f5dcd6;overflow:hidden">
<svg width="205" height="289" viewBox="208 107 205 289" style="left:0;top:0"><g fill="#e06024">
<circle cx="221.5" cy="108" r="21.8"/>
<circle cx="409" cy="120" r="35"/>
<circle cx="394.6" cy="189.5" r="13.5"/>
<circle cx="230.7" cy="224.5" r="10.7"/>
<circle cx="394.6" cy="300.3" r="5.5"/>
<circle cx="301.6" cy="357.6" r="10.5"/>
<circle cx="212.5" cy="380.4" r="10.6"/>
<circle cx="413" cy="383" r="21"/>
</g><path d="M313.0,151.5 C318.2,151.5 323.6,152.6 328.6,154.1 C333.6,155.6 339.0,157.9 343.0,160.6 C347.0,163.2 349.7,166.3 352.5,170.0 C355.3,173.7 357.8,178.3 360.0,182.5 C362.2,186.7 364.1,190.8 365.6,195.0 C367.1,199.2 368.0,203.3 368.8,207.5 C369.5,211.7 369.7,215.2 370.0,220.0 C370.3,224.8 370.8,231.5 370.5,236.5 C370.2,241.5 369.2,245.5 368.3,250.0 C367.4,254.5 366.0,259.1 365.0,263.3 C364.0,267.5 362.6,271.9 362.5,275.0 C362.4,278.1 362.7,279.5 364.2,281.7 C365.7,283.9 369.3,285.8 371.7,288.3 C374.1,290.8 376.7,294.2 378.3,296.7 C379.9,299.2 381.2,301.5 381.3,303.3 C381.4,305.1 380.2,306.5 379.2,307.5 C378.1,308.5 376.8,309.9 375.0,309.2 C373.2,308.5 370.8,305.0 368.3,303.3 C365.8,301.6 362.5,299.8 360.0,299.2 C357.5,298.6 355.1,299.0 353.3,300.0 C351.5,301.0 350.6,302.2 349.2,305.0 C347.8,307.8 346.8,313.6 345.0,316.7 C343.2,319.8 340.8,321.9 338.3,323.3 C335.8,324.7 332.8,325.0 330.0,325.0 C327.2,325.0 324.2,324.3 321.7,323.3 C319.2,322.3 316.5,320.9 315.0,319.2 C313.5,317.5 313.2,314.9 312.5,313.3 C311.8,311.7 312.3,311.3 310.8,309.6 C309.3,307.9 306.2,304.4 303.5,303.0 C300.8,301.6 298.2,301.2 294.8,301.5 C291.4,301.8 286.8,303.1 283.1,304.5 C279.5,305.9 276.0,308.5 272.9,309.6 C269.8,310.7 267.3,311.5 264.2,311.0 C261.1,310.5 256.9,308.8 254.0,306.6 C251.1,304.4 248.5,300.8 246.7,297.9 C244.9,295.0 243.9,291.9 243.0,289.2 C242.1,286.5 240.5,283.2 241.1,281.6 C241.7,280.0 244.8,281.1 246.7,279.7 C248.6,278.3 250.8,276.4 252.5,273.1 C254.2,269.8 256.0,265.5 256.9,260.0 C257.8,254.5 257.6,246.7 257.8,240.0 C258.0,233.3 257.9,225.8 258.0,220.0 C258.1,214.2 258.2,209.7 258.7,205.0 C259.2,200.3 259.8,195.9 260.8,191.7 C261.9,187.5 263.2,183.6 265.0,180.0 C266.8,176.4 268.6,173.3 271.7,170.0 C274.8,166.7 279.0,162.7 283.3,160.0 C287.6,157.3 292.6,155.4 297.5,154.0 C302.4,152.6 307.8,151.5 313.0,151.5Z" fill="#fdc878"/>
<g fill="#f2e3a8"><path d="M283.8,171.5 Q266.0,184.0 262.8,208.5 Q262.2,181.8 283.8,171.5Z"/><path d="M327.0,166.5 Q350.0,176.0 354.8,200.0 Q353.4,173.2 327.0,166.5Z"/><path d="M269.5,259.5 Q278.0,278.0 298.5,283.5 Q280.8,274.6 269.5,259.5Z"/><path d="M250.0,289.5 Q256.0,305.0 270.5,310.5 Q252.9,308.1 250.0,289.5Z"/><path d="M356.3,273.2 Q350.0,298.0 328.5,307.0 Q353.4,300.8 356.3,273.2Z"/></g>
<path d="M294.9,184.5 C297.1,182.5 300.0,181.6 303.0,180.6 C306.0,179.6 309.8,178.7 312.8,178.3 C315.8,177.9 318.6,177.8 321.2,178.0 C323.9,178.2 326.2,178.5 328.4,179.6 C330.6,180.7 332.4,182.4 334.3,184.5 C336.2,186.6 337.5,189.6 339.5,192.3 C341.5,195.1 344.1,196.6 346.5,201.0 C348.9,205.4 351.6,213.3 353.8,219.0 C355.9,224.7 358.9,230.4 359.6,235.0 C360.3,239.6 359.8,243.0 358.1,246.7 C356.4,250.3 352.7,254.1 349.4,256.9 C346.1,259.7 343.6,261.5 338.3,263.3 C333.0,265.1 324.0,267.9 317.3,267.8 C310.6,267.7 303.6,265.0 298.0,262.7 C292.4,260.4 287.4,257.2 283.5,254.0 C279.6,250.8 276.6,247.2 274.8,243.8 C273.0,240.2 272.5,237.1 272.8,233.0 C273.1,228.9 274.9,223.9 276.8,219.0 C278.7,214.1 282.0,207.9 284.2,203.5 C286.4,199.1 288.2,195.7 290.0,192.5 C291.8,189.3 292.7,186.5 294.9,184.5Z" fill="#fddfc6"/>
<path d="M294.9,184.5 C294.4,184.4 297.9,181.5 299.8,180.0 C301.7,178.5 303.6,176.5 306.3,175.4 C309.0,174.3 313.5,173.5 316.0,173.3 C318.5,173.1 319.3,173.5 321.2,174.4 C323.2,175.3 326.6,178.1 327.8,179.0 C329.0,179.9 329.5,179.8 328.4,179.6 C327.3,179.4 323.9,178.2 321.2,178.0 C318.6,177.8 315.8,177.9 312.8,178.3 C309.8,178.7 306.0,179.6 303.0,180.6 C300.0,181.6 295.4,184.6 294.9,184.5Z" fill="#ee7326"/>
<g fill="none" stroke="#3d3a38" stroke-linecap="round">
<path d="M282.5,192 Q294,188 305,186.2" stroke-width="0.9"/>
<path d="M326,185.1 Q338,186 348.6,189.5" stroke-width="0.9"/>
</g>
<path d="M283.5,204 C287,197 292,194 298,193.8 C303,193.6 306,194.5 307.5,197 C308.5,201 307.5,207 303,210 C299,212 294,211.5 290,209.5 C287,208 285,206 283.5,204Z" fill="#fff"/>
<defs><radialGradient id="ir" cx="0.5" cy="0.5" r="0.5"><stop offset="0" stop-color="#8a4a2e"/><stop offset="0.55" stop-color="#8e4c2e"/><stop offset="0.8" stop-color="#6e3620"/><stop offset="1" stop-color="#4a2214"/></radialGradient></defs><ellipse cx="297.9" cy="202.9" rx="7.5" ry="8.8" fill="url(#ir)"/>
<ellipse cx="298.7" cy="202.5" rx="3" ry="6.3" fill="#302828"/>
<circle cx="296.8" cy="199.1" r="1.5" fill="#fff"/>
<circle cx="293.5" cy="201.5" r="1.1" fill="#f4e8e4"/>
<path d="M283.3,203.8 C286,198 291,194 298,193.2 C302,192.8 305,193.3 307,194.3 L306.8,195 C304,194.4 301,194.4 297.5,194.8 C292,195.6 288,198.6 283.3,203.8Z" fill="#2a2626"/>
<path d="M345,202.6 C342,197 337,194 331,193.8 C327,193.8 324,195 322.5,198 C321.5,202 322.5,207 326,210 C330,212.5 336,211.5 340,208.5 C342,207 344,204.5 345,202.6Z" fill="#fff"/>
<ellipse cx="332.35" cy="203.15" rx="7.8" ry="8.6" fill="url(#ir)"/>
<ellipse cx="331.8" cy="203" rx="2.7" ry="6" fill="#302828"/>
<circle cx="332.3" cy="198.3" r="1.7" fill="#fff"/>
<circle cx="336.1" cy="200.2" r="1.2" fill="#f4e8e4"/>
<path d="M323,196.3 C326,193.8 329,192.8 332,192.8 C337,192.8 341,195.6 345.2,201.5 C341,197.2 337,194.6 332,194.5 C329,194.5 326,195.2 323,196.3Z" fill="#2a2626"/>
<ellipse cx="290.2" cy="224.7" rx="6.25" ry="1.3" fill="#e6cdd8"/>
<ellipse cx="342.8" cy="223.3" rx="7" ry="1.3" fill="#e6cdd8"/>
<path d="M309.7,249.9 L325.6,249.9 C324,254.5 321,257.7 317.6,257.7 C314,257.7 311,254.5 309.7,249.9Z" fill="#dfb5d5"/>
<rect x="309.5" y="247.8" width="16.6" height="2.1" fill="#cf4a1f"/></svg></div>
<div class="a" style="left:208px;top:107px;width:0.7px;height:289px;background:rgba(120,100,95,0.25);"></div>
<div class="a" style="left:594px;top:81.1px;width:8.3px;height:340px;background:#fff;"></div>
<div class="a" style="left:594px;top:82.4px;width:7.8px;height:7.3px;background:#efefef;"></div>
<div class="a" style="left:594px;top:412px;width:7.8px;height:8px;background:#efefef;"></div>
<svg style="left:595.5px;top:84.3px;" width="5" height="3" viewBox="0 0 5 3"><path d="M0.4,2.6 L2.5,0.6 L4.6,2.6" fill="none" stroke="#333" stroke-width="1.1"/></svg>
<div class="a" style="left:594px;top:166px;width:8px;height:169px;background:#c8c8c8;"></div>
<svg style="left:595.5px;top:414.8px;" width="5" height="3" viewBox="0 0 5 3"><path d="M0.4,0.4 L2.5,2.4 L4.6,0.4" fill="none" stroke="#333" stroke-width="1.1"/></svg>
<div class="a" style="left:25px;top:421px;width:577px;height:9px;background:#f4f4f4;"></div>
<div class="a" style="left:25px;top:421px;width:577px;height:0.8px;background:#d8d8d8;"></div>
<svg style="left:27.5px;top:423px;" width="6" height="7" viewBox="0 0 6 7"><path d="M0.5,0.5 H3.5 L5.5,2.5 V6.5 H0.5Z" fill="#f8f8f8" stroke="#555" stroke-width="0.7"/><path d="M1.5,4 H4.5 M3,2.5 V5.5" stroke="#555" stroke-width="0.6"/></svg>
<svg style="left:37.5px;top:423.8px;" width="4" height="5" viewBox="0 0 4 5"><path d="M0.5,0 V5" stroke="#888" stroke-width="0.8"/><path d="M4,0 V5 L1,2.5Z" fill="#888"/></svg>
<svg style="left:47.5px;top:423.8px;" width="3" height="5" viewBox="0 0 3 5"><path d="M3,0 V5 L0,2.5Z" fill="#888"/></svg>
<div class="t" style="left:61.6px;top:423.4px;font-size:6.8px;color:#333;;transform:scaleX(0.876);transform-origin:0 0">1 of 1</div>
<svg style="left:89.5px;top:423.8px;" width="3" height="5" viewBox="0 0 3 5"><path d="M0,0 V5 L3,2.5Z" fill="#888"/></svg>
<svg style="left:97px;top:423.8px;" width="4" height="5" viewBox="0 0 4 5"><path d="M3.5,0 V5" stroke="#888" stroke-width="0.8"/><path d="M0,0 V5 L3,2.5Z" fill="#888"/></svg>
<svg style="left:105px;top:423px;" width="6" height="7" viewBox="0 0 6 7"><path d="M0.5,0.5 H3.5 L5.5,2.5 V6.5 H0.5Z" fill="#f8f8f8" stroke="#555" stroke-width="0.7"/><path d="M1.5,4 H4.5 M3,2.5 V5.5" stroke="#555" stroke-width="0.6"/></svg>
<svg style="left:113.5px;top:421px;" width="36" height="9.2" viewBox="0 0 36 9.2"><path d="M0.5,0 V9 H35.5 L33.5,3 L30,0" fill="#fff" stroke="#c8c8c8" stroke-width="0.7"/></svg>
<div class="t" style="left:121px;top:423.2px;font-size:6.8px;color:#333;;transform:scaleX(0.849);transform-origin:0 0">Page 1</div>
<svg style="left:311px;top:422.5px;" width="2" height="6" viewBox="0 0 2 6"><g fill="#999"><rect y="0" width="1" height="1"/><rect y="2" width="1" height="1"/><rect y="4" width="1" height="1"/></g></svg>
<svg style="left:317.5px;top:423.5px;" width="3" height="4" viewBox="0 0 3 4"><path d="M2.5,0.3 L0.5,2 L2.5,3.7" fill="none" stroke="#222" stroke-width="0.9"/></svg>
<div class="a" style="left:323.3px;top:421.8px;width:259.7px;height:7px;background:#c8c8c8;"></div>
<svg style="left:586.5px;top:423.5px;" width="3" height="4" viewBox="0 0 3 4"><path d="M0.5,0.3 L2.5,2 L0.5,3.7" fill="none" stroke="#222" stroke-width="0.9"/></svg>
<svg style="left:594.5px;top:421.5px;" width="7" height="7" viewBox="0 0 7 7"><circle cx="3" cy="3" r="2.3" fill="#dde6f4" stroke="#4a4a68" stroke-width="0.8"/><path d="M4.6,4.6 L6.8,6.8" stroke="#3a3a50" stroke-width="1.1"/><path d="M1.8,3 H4.2 M3,1.8 V4.2" stroke="#4a4a68" stroke-width="0.5"/></svg>
<div class="a" style="left:16.5px;top:430px;width:586px;height:10px;background:#f7f7f7;"></div>
<div class="a" style="left:16.5px;top:430px;width:586px;height:0.7px;background:#e0e0e0;"></div>
<div class="a" style="left:16.5px;top:439.5px;width:586px;height:0.7px;background:#e2e2e2;"></div>
<svg style="left:17.5px;top:432px;" width="1" height="7" viewBox="0 0 1 7"><g fill="#999"><rect y="0" width="1" height="1"/><rect y="2" width="1" height="1"/><rect y="4" width="1" height="1"/><rect y="6" width="1" height="1"/></g></svg>
<svg style="left:21.5px;top:432.5px;" width="3" height="5" viewBox="0 0 3 5"><path d="M0,0 V5 L2.5,2.5Z" fill="#111"/></svg>
<svg style="left:28.5px;top:431.5px;" width="7" height="7" viewBox="0 0 7 7"><path d="M1,6 L4.5,2.5" stroke="#3a5a6a" stroke-width="1.2"/><path d="M4,1.5 L5.5,0 L7,1.5 L5.5,3Z" fill="#2a2a3a"/></svg>
<svg style="left:38.5px;top:432.5px;" width="3" height="4" viewBox="0 0 3 4"><path d="M2.5,0.3 L0.5,2 L2.5,3.7" fill="none" stroke="#bbb" stroke-width="0.7"/></svg>
<svg style="left:44px;top:432px;" width="10" height="8" viewBox="0 0 10 8"><rect x="0.4" y="0.4" width="9.2" height="7.2" fill="#fff" stroke="#444" stroke-width="0.7"/><path d="M0.5,0.5 L9.5,7.5 M9.5,0.5 L0.5,7.5" stroke="#444" stroke-width="0.6"/></svg>
<div class="t" style="left:226.5px;top:432.6px;font-size:6.6px;color:#bababa;font-style:italic;transform:scaleX(0.930);transform-origin:0 0">Drag colors (or objects) here to store these colors with your document</div>
<svg style="left:584px;top:432.5px;" width="3" height="4" viewBox="0 0 3 4"><path d="M0.5,0.3 L2.5,2 L0.5,3.7" fill="none" stroke="#bbb" stroke-width="0.7"/></svg>
<div class="t" style="left:592.5px;top:432px;font-size:6.5px;color:#bbb;">»</div>
<div class="a" style="left:1px;top:440.3px;width:766px;height:18.5px;background:#f6f6f6;"></div>
<div class="a" style="left:1px;top:440.3px;width:766px;height:0.8px;background:#e0e0e0;"></div>
<div class="t" style="left:2.7px;top:446.9px;font-size:7.0px;color:#333;;transform:scaleX(0.856);transform-origin:0 0">( 2.491 , 7.605 )</div>
<div class="a" style="left:50px;top:445.8px;width:8px;height:8px;background:#fff;border:1px solid #555"></div>
<svg style="left:52.5px;top:447.3px;" width="3" height="5" viewBox="0 0 3 5"><path d="M0,0 V5 L3,2.5Z" fill="#111"/></svg>
<svg style="left:526px;top:446px;" width="8" height="8" viewBox="0 0 8 8"><path d="M0.5,0.5 H7.5 V6 L4,7.8 L0.5,6Z" fill="#a8b8d8" stroke="#7a8ab8" stroke-width="0.5"/><circle cx="4" cy="3.8" r="1.6" fill="#c03030"/><circle cx="4" cy="3.8" r="0.8" fill="#fff"/></svg>
<svg style="left:541px;top:446px;" width="9" height="8" viewBox="0 0 9 8"><path d="M1,4 L4.5,0.5 L8,4 L4.5,7.5Z" fill="#f4f4f8" stroke="#4a4a60" stroke-width="0.7"/><path d="M1.5,4.5 H7.5 L4.5,7.5Z" fill="#f28a1a"/><path d="M8,4 Q9,5.5 8.5,7" stroke="#f2a050" stroke-width="0.8" fill="none"/></svg>
<div class="a" style="left:552.8px;top:445px;width:9.2px;height:9px;background:#f0f0f0;"></div>
<svg style="left:552.8px;top:445px;" width="9.2" height="9" viewBox="0 0 9.2 9"><path d="M0.5,0.5 L8.7,8.5 M8.7,0.5 L0.5,8.5" stroke="#333" stroke-width="0.7"/></svg>
<div class="t" style="left:564px;top:447.2px;font-size:7.0px;color:#222;;transform:scaleX(0.896);transform-origin:0 0">None</div>
<div class="a" style="left:649.5px;top:444px;width:0.8px;height:12px;background:#d8d8d8;"></div>
<svg style="left:655px;top:445.5px;" width="6" height="9" viewBox="0 0 6 9"><path d="M3,0.5 L5,3 V8 H1 V3Z" fill="#e8e8f0" stroke="#5a5a70" stroke-width="0.7"/><path d="M3,3 V6" stroke="#5a5a70" stroke-width="0.6"/></svg>
<div class="a" style="left:664px;top:446px;width:9px;height:8.5px;background:#1e1e1e;border:0.7px solid #888"></div>
<div class="t" style="left:675px;top:447.4px;font-size:6.6px;color:#222;;transform:scaleX(0.904);transform-origin:0 0">C:0 M:0 Y:0 K:100</div>
<div class="a" style="left:602.3px;top:59px;width:2.5px;height:381px;background:#f5f5f5;"></div>
<div class="a" style="left:602.3px;top:81px;width:0.8px;height:340px;background:#e2e2e2;"></div>
<div class="a" style="left:604.8px;top:59px;width:153.7px;height:11.3px;background:#ececec;"></div>
<div class="t" style="left:606.8px;top:62.8px;font-size:6.5px;color:#333;;transform:scaleX(0.960);transform-origin:0 0">Object Properties</div>
<svg style="left:741.5px;top:63.5px;" width="5" height="4" viewBox="0 0 5 4"><path d="M0,0 V4 L2,2Z M2.5,0 V4 L4.5,2Z" fill="#a8a8a8"/></svg>
<svg style="left:750.5px;top:63px;" width="4.5" height="4.5" viewBox="0 0 4.5 4.5"><path d="M0,0 L4.5,4.5 M4.5,0 L0,4.5" stroke="#b0b0b0" stroke-width="0.8"/></svg>
<div class="a" style="left:604.8px;top:70.3px;width:143.2px;height:14.4px;background:#e3e3e3;border-top:0.8px solid #cccccc;border-bottom:1.3px solid #bcbcbc"></div>
<div class="a" style="left:606.5px;top:71.5px;width:11px;height:11.8px;background:#fff;"></div>
<svg style="left:609.5px;top:73.5px;" width="5" height="8" viewBox="0 0 5 8"><path d="M2.5,0.5 L4.5,3.5 V7.5 H0.5 V3.5Z" fill="#dfe3ee" stroke="#5a5a78" stroke-width="0.7"/><path d="M2.5,3 V6" stroke="#5a5a78" stroke-width="0.6"/></svg>
<svg style="left:622px;top:73.5px;" width="10" height="9" viewBox="0 0 10 9"><path d="M1,4 L4.5,0.5 L8,4 L4.5,7.5Z" fill="#f4f4f8" stroke="#4a4a60" stroke-width="0.8"/><path d="M1.5,4.5 H7.5 L4.5,7.5Z" fill="#f28a1a"/><path d="M8,4 Q9.5,5.5 9,7.5" stroke="#f2a050" stroke-width="0.9" fill="none"/></svg>
<svg style="left:638.5px;top:73.5px;" width="7" height="8.5" viewBox="0 0 7 8.5"><path d="M0.5,0.5 H6.5 L5.5,3.5 Q3.5,4.8 1.5,3.5Z" fill="#f4f4f8" stroke="#4a4a60" stroke-width="0.7"/><path d="M3.5,4.2 V7.8 M1.5,7.8 H5.5" stroke="#4a4a60" stroke-width="0.8"/></svg>
<div class="a" style="left:719px;top:71.5px;width:11.2px;height:12px;background:#fff;"></div>
<svg style="left:721px;top:74.5px;" width="8" height="6" viewBox="0 0 8 6"><path d="M0.5,1.5 H2.5 L3.2,0.5 H5.5 L6.2,1.5 H7.5 V5.5 H0.5Z" fill="#f6f6fa" stroke="#4a4a68" stroke-width="0.8"/></svg>
<div class="a" style="left:732px;top:71.5px;width:0.7px;height:12px;background:#c4c4c4;"></div>
<div class="a" style="left:733.5px;top:71.5px;width:0.7px;height:12px;background:#c4c4c4;"></div>
<div class="a" style="left:735px;top:71.5px;width:11px;height:12px;background:#fff;"></div>
<svg style="left:736.5px;top:73.5px;" width="8" height="8" viewBox="0 0 8 8"><rect x="0.5" y="0.5" width="5" height="4.5" fill="#f6f6fa" stroke="#4a4a68" stroke-width="0.7"/><path d="M3,5 H6 V3.5 L8,5.5 L6,7.5 V6.3 H3Z" fill="#2a2a3a"/></svg>
<div class="a" style="left:604.8px;top:84.4px;width:143.2px;height:355.6px;background:#f7f7f7;"></div>
<div class="t" style="left:607px;top:88.6px;font-size:6.5px;color:#222;font-weight:bold;transform:scaleX(0.983);transform-origin:0 0">Outline</div>
<div class="a" style="left:740.2px;top:89.5px;width:4px;height:4px;background:#fff;border:0.7px solid #9a9a9a"></div>
<div class="a" style="left:740.2px;top:104.5px;width:4px;height:4px;background:#fff;border:0.7px solid #9a9a9a"></div>
<div class="a" style="left:740.2px;top:119.5px;width:4px;height:4px;background:#fff;border:0.7px solid #9a9a9a"></div>
<div class="a" style="left:740.2px;top:134.5px;width:4px;height:4px;background:#fff;border:0.7px solid #9a9a9a"></div>
<div class="a" style="left:740.2px;top:153px;width:4px;height:4px;background:#fff;border:0.7px solid #9a9a9a"></div>
<div class="a" style="left:740.2px;top:168px;width:4px;height:4px;background:#fff;border:0.7px solid #9a9a9a"></div>
<div class="a" style="left:740.2px;top:183px;width:4px;height:4px;background:#fff;border:0.7px solid #9a9a9a"></div>
<div class="a" style="left:684px;top:153px;width:4px;height:4px;background:#fff;border:0.7px solid #9a9a9a"></div>
<svg style="left:607px;top:101px;" width="8" height="8" viewBox="0 0 8 8"><path d="M0.5,0 V8" stroke="#5a5a78" stroke-width="0.7"/><path d="M2,7.5 L2.6,4.2 L5.8,0.9 Q7.6,0.3 7.6,2.2 L4.4,5.6Z" fill="#e6e8f2" stroke="#4a4a68" stroke-width="0.75"/><circle cx="4.6" cy="3.8" r="0.7" fill="#4a4a68"/></svg>
<div class="a" style="left:617.3px;top:99.6px;width:71.5px;height:12.4px;background:#fff;border:1px solid #c0c0c0"></div>
<div class="a" style="left:620.8px;top:102px;width:16.5px;height:7.5px;background:#3390ff;"></div>
<div class="t" style="left:621px;top:103.2px;font-size:6.8px;color:#fff;;transform:scaleX(0.911);transform-origin:0 0">0.5 pt</div>
<svg style="left:680.5px;top:104.3px;" width="5" height="3" viewBox="0 0 5 3"><path d="M0.3,0.3 L2.5,2.5 L4.7,0.3" fill="none" stroke="#555" stroke-width="0.7"/></svg>
<div class="a" style="left:691.8px;top:99.8px;width:45px;height:12px;background:#e3e3e3;border:1px solid #d0d0d0"></div>
<div class="t" style="left:693.3px;top:103.2px;font-size:6.8px;color:#222;;transform:scaleX(1.003);transform-origin:0 0">points</div>
<svg style="left:729.5px;top:104.3px;" width="5" height="3" viewBox="0 0 5 3"><path d="M0.3,0.3 L2.5,2.5 L4.7,0.3" fill="none" stroke="#555" stroke-width="0.7"/></svg>
<svg style="left:606.5px;top:115.5px;" width="9" height="9" viewBox="0 0 9 9"><circle cx="1" cy="1.5" r="0.9" fill="#d02020"/><circle cx="1" cy="4.2" r="0.9" fill="#20a040"/><circle cx="1" cy="7" r="0.9" fill="#e0c020"/><path d="M3,8 L3.6,4.7 L6.8,1.4 Q8.6,0.8 8.6,2.7 L5.4,6.1Z" fill="#e6e8f2" stroke="#4a4a68" stroke-width="0.75"/><circle cx="5.6" cy="4.3" r="0.7" fill="#4a4a68"/></svg>
<div class="a" style="left:617.3px;top:114.5px;width:71.5px;height:12.2px;background:#fff;border:1px solid #c0c0c0"></div>
<div class="a" style="left:619px;top:115.8px;width:59.5px;height:9.3px;background:#1e1e1e;"></div>
<div class="a" style="left:679.5px;top:115.2px;width:8.7px;height:11px;background:#e0e0e0;"></div>
<svg style="left:681.5px;top:119.8px;" width="5" height="3" viewBox="0 0 5 3"><path d="M0.3,0.3 L2.5,2.5 L4.7,0.3" fill="none" stroke="#555" stroke-width="0.7"/></svg>
<svg style="left:606.5px;top:130.5px;" width="9" height="9" viewBox="0 0 9 9"><g fill="#6a6a88"><rect x="0.5" y="0" width="0.8" height="0.8"/><rect x="0.5" y="2" width="0.8" height="0.8"/><rect x="0.5" y="4" width="0.8" height="0.8"/><rect x="0.5" y="6" width="0.8" height="0.8"/><rect x="0.5" y="8" width="0.8" height="0.8"/></g><path d="M3,8 L3.6,4.7 L6.8,1.4 Q8.6,0.8 8.6,2.7 L5.4,6.1Z" fill="#e6e8f2" stroke="#4a4a68" stroke-width="0.75"/><circle cx="5.6" cy="4.3" r="0.7" fill="#4a4a68"/></svg>
<div class="a" style="left:617.3px;top:129.4px;width:71.5px;height:12.3px;background:#fff;border:1px solid #c0c0c0"></div>
<div class="a" style="left:619px;top:136px;width:59.5px;height:0.9px;background:#444;"></div>
<div class="a" style="left:679.5px;top:130.2px;width:8.7px;height:11px;background:#e0e0e0;"></div>
<svg style="left:681.5px;top:134.8px;" width="5" height="3" viewBox="0 0 5 3"><path d="M0.3,0.3 L2.5,2.5 L4.7,0.3" fill="none" stroke="#555" stroke-width="0.7"/></svg>
<svg style="left:694.3px;top:136.3px;" width="6" height="1.2" viewBox="0 0 6 1.2"><g fill="#333"><rect x="0" width="1.1" height="1.1"/><rect x="2.2" width="1.1" height="1.1"/><rect x="4.4" width="1.1" height="1.1"/></g></svg>
<div class="a" style="left:606px;top:145px;width:139px;height:0.8px;background:#e0e0e0;"></div>
<svg style="left:607px;top:151.5px;" width="8.8" height="7.2" viewBox="0 0 8.8 7.2"><path d="M0,7.2 L2,0 H6.8 L8.8,7.2 H5.6 L4.4,3.8 L3.2,7.2Z" fill="#4a4a68"/></svg>
<div class="a" style="left:617.6px;top:149.3px;width:63.1px;height:11.3px;background:#fff;border:1px solid #b8b8b8"></div>
<div class="a" style="left:671.8px;top:150.2px;width:8px;height:9.5px;background:#e6e6e6;"></div>
<div class="t" style="left:618.5px;top:152px;font-size:6.8px;color:#222;;transform:scaleX(0.892);transform-origin:0 0">45.0</div>
<svg style="left:674.3px;top:151.5px;" width="3" height="2" viewBox="0 0 3 2"><path d="M0,2 H3 L1.5,0Z" fill="#333"/></svg>
<svg style="left:674.3px;top:156.3px;" width="3" height="2" viewBox="0 0 3 2"><path d="M0,0 H3 L1.5,2Z" fill="#333"/></svg>
<div class="a" style="left:691.6px;top:149px;width:12px;height:11.5px;background:#fff;border:0.8px solid #c8c8c8"></div>
<svg style="left:694.5px;top:151.5px;" width="7" height="7" viewBox="0 0 7 7"><path d="M0,0 H7 V3.5 H3.5 V7 H0Z" fill="#3e3e5e"/></svg>
<svg style="left:710.5px;top:151.5px;" width="7" height="7" viewBox="0 0 7 7"><path d="M2,0 H7 V3.5 H3.5 V7 H0 V2Q0,0 2,0Z" fill="#3e3e5e"/></svg>
<svg style="left:726.5px;top:151.5px;" width="7.5" height="7" viewBox="0 0 7.5 7"><path d="M5,0 H7.5 V3.5 H5.5 Q3.5,3.5 3.5,5.5 V7 H0 V5 Q0,0 5,0Z" fill="#3e3e5e"/></svg>
<div class="a" style="left:691.6px;top:164px;width:12px;height:11.5px;background:#fff;border:0.8px solid #c8c8c8"></div>
<svg style="left:694px;top:167.5px;" width="8" height="4" viewBox="0 0 8 4"><rect x="0" y="0" width="8" height="4" rx="0.5" fill="#3e3e5e"/><rect x="0.8" y="1.6" width="1.5" height="0.8" fill="#e8e8ee"/></svg>
<svg style="left:710px;top:167.5px;" width="8" height="4" viewBox="0 0 8 4"><path d="M2,0 H8 V4 H2 Q0,4 0,2 Q0,0 2,0Z" fill="#3e3e5e"/><rect x="1.5" y="1.6" width="1.5" height="0.8" fill="#e8e8ee"/></svg>
<svg style="left:726px;top:167.5px;" width="8.2" height="4" viewBox="0 0 8.2 4"><rect x="0" y="0" width="8.2" height="4" fill="#3e3e5e"/><rect x="2" y="1.6" width="1.5" height="0.8" fill="#e8e8ee"/></svg>
<svg style="left:693.5px;top:180.5px;" width="8.5" height="8" viewBox="0 0 8.5 8"><path d="M0,0 H8.5 V8 H5 V3.3 H0Z" fill="#3e3e5e"/></svg>
<div class="a" style="left:708.5px;top:178.5px;width:12px;height:12px;background:#fff;border:0.8px solid #c8c8c8"></div>
<svg style="left:710.5px;top:180.5px;" width="8" height="8" viewBox="0 0 8 8"><path d="M0,0 H8 V8 H4.6 V3.3 H0Z" fill="#3e3e5e"/></svg>
<svg style="left:726.5px;top:180.5px;" width="8" height="8" viewBox="0 0 8 8"><path d="M0,0.8 H6.5 L8,0 V8 H4.6 V3.8 H0Z" fill="#3e3e5e"/></svg>
<div class="a" style="left:605.2px;top:194.8px;width:142.8px;height:7.8px;background:#ececec;"></div>
<svg style="left:674.2px;top:197.2px;" width="4" height="2.3" viewBox="0 0 4 2.3"><path d="M0,0 H4 L2,2.5Z" fill="#222"/></svg>
<div class="t" style="left:609.7px;top:415.2px;font-size:10.2px;color:#c4c4c4;;transform:scaleX(1.035);transform-origin:0 0">Activate Windows</div>
<div class="t" style="left:609.7px;top:428.3px;font-size:7.3px;color:#c4c4c4;;transform:scaleX(1.086);transform-origin:0 0">Go to Settings to activate Windows.</div>
<div class="a" style="left:747.7px;top:70.3px;width:10.5px;height:369.7px;background:#f0f0f0;"></div>
<div class="a" style="left:747.7px;top:70.3px;width:10.3px;height:71.3px;background:#c4c4c4;"></div>
<div class="t" style="left:756.2px;top:83.8px;font-size:6.5px;color:#333;transform:rotate(90deg) scaleX(0.964);transform-origin:0 0">Object Properties</div>
<svg style="left:749.5px;top:72.5px;" width="7" height="7" viewBox="0 0 7 7"><rect x="1" y="2" width="5" height="4.5" fill="#9a9ab8"/><circle cx="2" cy="2" r="1.5" fill="#f2a21a"/></svg>
<div class="a" style="left:747.7px;top:141.4px;width:10.3px;height:62.8px;background:#e6e6e6;border-left:0.7px solid #cfcfcf;border-bottom:0.7px solid #cfcfcf"></div>
<svg style="left:749.2px;top:143.8px;" width="7" height="6" viewBox="0 0 7 6"><path d="M1,5 Q1,1 5,1 M3.5,0 L5.5,1 L3.5,2.5" fill="none" stroke="#4a4a68" stroke-width="0.8"/></svg>
<div class="t" style="left:756.2px;top:150.5px;font-size:6.5px;color:#333;transform:rotate(90deg) scaleX(1.053);transform-origin:0 0">Transformations</div>
<div class="a" style="left:747.7px;top:204.2px;width:10.3px;height:76px;background:#e6e6e6;border-left:0.7px solid #cfcfcf;border-bottom:0.7px solid #cfcfcf"></div>
<svg style="left:749.8px;top:212.3px;" width="6" height="8" viewBox="0 0 6 8"><rect x="0.5" y="0.5" width="5" height="7" fill="#e8c020" stroke="#8a2a2a" stroke-width="0.8"/></svg>
<div class="t" style="left:756.2px;top:220.8px;font-size:6.5px;color:#333;transform:rotate(90deg) scaleX(1.024);transform-origin:0 0">Bitmap Color Mask</div>
<svg style="left:748.5px;top:288px;" width="9" height="9" viewBox="0 0 9 9"><circle cx="4.5" cy="4.5" r="4" fill="none" stroke="#c8c8c8" stroke-width="0.8"/><path d="M4.5,1.8 V7.2 M1.8,4.5 H7.2" stroke="#c8c8c8" stroke-width="0.8"/></svg>
<div class="a" style="left:758.3px;top:59px;width:9.7px;height:381px;background:#f2f2f2;"></div>
<svg style="left:761px;top:61.5px;" width="5" height="1" viewBox="0 0 5 1"><g fill="#999"><rect x="0" width="1" height="1"/><rect x="2" width="1" height="1"/><rect x="4" width="1" height="1"/></g></svg>
<svg style="left:761.5px;top:65.8px;" width="3.5" height="5" viewBox="0 0 3.5 5"><path d="M0,0 V5 L3.5,2.5Z" fill="#111"/></svg>
<svg style="left:760.5px;top:73.5px;" width="6" height="6" viewBox="0 0 6 6"><path d="M0.5,5.5 L4.5,1.5" stroke="#aaa" stroke-width="1"/><path d="M4,1 L5,0 L6,1 L5,2Z" fill="#aaa"/></svg>
<svg style="left:761px;top:82px;" width="5" height="3" viewBox="0 0 5 3"><path d="M0.3,2.7 L2.5,0.5 L4.7,2.7" fill="none" stroke="#c4c4c4" stroke-width="0.7"/></svg>
<div class="a" style="left:758.5px;top:88.4px;width:9.5px;height:9.2px;background:#fff;border:0.7px solid #555"></div>
<svg style="left:758.5px;top:88.4px;" width="9.5" height="9.2" viewBox="0 0 9.5 9.2"><path d="M0.5,0.5 L9,8.7 M9,0.5 L0.5,8.7" stroke="#444" stroke-width="0.6"/></svg>
<div class="a" style="left:758.5px;top:97.6px;width:9.5px;height:9.4px;background:#231f20;"></div>
<div class="a" style="left:758.5px;top:106.7px;width:9.5px;height:9.4px;background:#414042;"></div>
<div class="a" style="left:758.5px;top:115.8px;width:9.5px;height:9.4px;background:#58595b;"></div>
<div class="a" style="left:758.5px;top:124.9px;width:9.5px;height:9.4px;background:#6d6e71;"></div>
<div class="a" style="left:758.5px;top:134.0px;width:9.5px;height:9.4px;background:#808285;"></div>
<div class="a" style="left:758.5px;top:143.1px;width:9.5px;height:9.4px;background:#939598;"></div>
<div class="a" style="left:758.5px;top:152.2px;width:9.5px;height:9.4px;background:#a7a9ac;"></div>
<div class="a" style="left:758.5px;top:161.3px;width:9.5px;height:9.4px;background:#bcbec0;"></div>
<div class="a" style="left:758.5px;top:170.4px;width:9.5px;height:9.4px;background:#d1d3d4;"></div>
<div class="a" style="left:758.5px;top:179.5px;width:9.5px;height:9.4px;background:#e6e7e8;"></div>
<div class="a" style="left:758.5px;top:188.6px;width:9.5px;height:9.4px;background:#ffffff;"></div>
<div class="a" style="left:758.5px;top:197.7px;width:9.5px;height:9.4px;background:#2e3192;"></div>
<div class="a" style="left:758.5px;top:206.8px;width:9.5px;height:9.4px;background:#00aeef;"></div>
<div class="a" style="left:758.5px;top:215.9px;width:9.5px;height:9.4px;background:#00a651;"></div>
<div class="a" style="left:758.5px;top:225.0px;width:9.5px;height:9.4px;background:#fff200;"></div>
<div class="a" style="left:758.5px;top:234.1px;width:9.5px;height:9.4px;background:#ed1c24;"></div>
<div class="a" style="left:758.5px;top:243.2px;width:9.5px;height:9.4px;background:#ec008c;"></div>
<div class="a" style="left:758.5px;top:252.3px;width:9.5px;height:9.4px;background:#92278f;"></div>
<div class="a" style="left:758.5px;top:261.4px;width:9.5px;height:9.4px;background:#f7941d;"></div>
<div class="a" style="left:758.5px;top:270.5px;width:9.5px;height:9.4px;background:#f6a5b0;"></div>
<div class="a" style="left:758.5px;top:279.6px;width:9.5px;height:9.4px;background:#857467;"></div>
<div class="a" style="left:758.5px;top:288.7px;width:9.5px;height:9.4px;background:#c8c6e6;"></div>
<div class="a" style="left:758.5px;top:297.8px;width:9.5px;height:9.4px;background:#a29dcf;"></div>
<div class="a" style="left:758.5px;top:306.9px;width:9.5px;height:9.4px;background:#6f86c6;"></div>
<div class="a" style="left:758.5px;top:316.0px;width:9.5px;height:9.4px;background:#6c5fa7;"></div>
<div class="a" style="left:758.5px;top:325.1px;width:9.5px;height:9.4px;background:#8480aa;"></div>
<div class="a" style="left:758.5px;top:334.2px;width:9.5px;height:9.4px;background:#4a6396;"></div>
<div class="a" style="left:758.5px;top:343.3px;width:9.5px;height:9.4px;background:#4b4370;"></div>
<div class="a" style="left:758.5px;top:352.4px;width:9.5px;height:9.4px;background:#5a7aa0;"></div>
<div class="a" style="left:758.5px;top:361.5px;width:9.5px;height:9.4px;background:#0d9ce0;"></div>
<div class="a" style="left:758.5px;top:370.6px;width:9.5px;height:9.4px;background:#8ad4f2;"></div>
<div class="a" style="left:758.5px;top:379.7px;width:9.5px;height:9.4px;background:#a8c4d4;"></div>
<div class="a" style="left:758.5px;top:388.8px;width:9.5px;height:9.4px;background:#8aa0ae;"></div>
<div class="a" style="left:758.5px;top:397.9px;width:9.5px;height:9.4px;background:#617883;"></div>
<div class="a" style="left:758.5px;top:407.0px;width:9.5px;height:9.4px;background:#43545c;"></div>
<div class="a" style="left:758.5px;top:416.1px;width:9.5px;height:5.2px;background:#4a6460;"></div>
<svg style="left:761px;top:422.5px;" width="5" height="3" viewBox="0 0 5 3"><path d="M0.3,0.3 L2.5,2.5 L4.7,0.3" fill="none" stroke="#777" stroke-width="0.7"/></svg>
<div class="t" style="left:760.5px;top:429.5px;font-size:6.5px;color:#aaa;">»</div>
<div class="a" style="left:0px;top:458.9px;width:768px;height:21.1px;background:#303030;"></div>
<svg style="left:8px;top:465px;" width="9" height="9" viewBox="0 0 9 9"><g fill="#fff"><path d="M0,1.3 L3.9,0.7 V4.2 H0Z"/><path d="M4.5,0.6 L9,0 V4.2 H4.5Z"/><path d="M0,4.8 H3.9 V8.3 L0,7.7Z"/><path d="M4.5,4.8 H9 V9 L4.5,8.4Z"/></g></svg>
<div class="a" style="left:25.4px;top:458.9px;width:183.5px;height:21.1px;background:#f2f2f2;"></div>
<svg style="left:31px;top:465px;" width="10" height="10" viewBox="0 0 10 10"><circle cx="5" cy="5" r="4.2" fill="none" stroke="#111" stroke-width="1.3"/></svg>
<div class="t" style="left:47px;top:466.3px;font-size:7.9px;color:#333;;transform:scaleX(0.977);transform-origin:0 0">Type here to search</div>
<svg style="left:195.5px;top:464.5px;" width="6" height="10" viewBox="0 0 6 10"><path d="M1.5,0.5 H4.5 V6 Q4.5,7.5 3,7.5 Q1.5,7.5 1.5,6Z" fill="none" stroke="#333" stroke-width="0.9"/><path d="M0.5,5 Q0.5,8.5 3,8.5 Q5.5,8.5 5.5,5 M3,8.5 V10" fill="none" stroke="#333" stroke-width="0.8"/></svg>
<svg style="left:217px;top:465px;" width="9" height="8.5" viewBox="0 0 9 8.5"><rect x="0.8" y="2.2" width="5.5" height="4" fill="none" stroke="#ddd" stroke-width="0.9"/><path d="M0,0.5 H7 M0,8 H7 M8.3,0 V8.5" stroke="#ddd" stroke-width="0.8"/></svg>
<div class="a" style="left:341px;top:458.9px;width:23.7px;height:21.1px;background:#4a4a4a;"></div>
<svg style="left:243.4px;top:463px;" width="11.3" height="10.8" viewBox="0 0 11.3 10.8"><rect x="0.5" y="0.5" width="10.3" height="9.8" fill="#0a1a3a" stroke="#31a8ff" stroke-width="0.9"/><text x="2" y="7.8" font-family="Liberation Sans" font-size="6" font-weight="bold" fill="#31a8ff">Ps</text></svg>
<svg style="left:269px;top:463.5px;" width="12" height="10" viewBox="0 0 12 10"><path d="M0,1 H4.5 L5.5,2.2 H12 V10 H0Z" fill="#f0c040"/><rect x="0" y="3.5" width="12" height="6.5" fill="#f8d870"/><rect x="3.5" y="6" width="5" height="3" fill="#2a8ad8"/></svg>
<svg style="left:295px;top:463px;" width="12" height="11" viewBox="0 0 12 11"><circle cx="6" cy="5.8" r="5.3" fill="#e8501a"/><circle cx="6.3" cy="6" r="3.3" fill="#2a3a8a"/><path d="M1,4 Q3,0 7,0.5 Q11.5,1.5 11.3,6 Q10,2.5 6.5,2.5 Q3,3 1.5,6Z" fill="#f8a020"/></svg>
<svg style="left:321px;top:463px;" width="12.3" height="11" viewBox="0 0 12.3 11"><rect x="3.5" y="0.5" width="8.5" height="10" fill="#e8eef8"/><path d="M0,1.5 L7.5,0 V11 L0,9.5Z" fill="#2b5797"/><text x="1.2" y="7.8" font-family="Liberation Sans" font-size="5.5" font-weight="bold" fill="#fff">W</text><g fill="#7a9acc"><rect x="8" y="2.5" width="3" height="0.7"/><rect x="8" y="4.5" width="3" height="0.7"/><rect x="8" y="6.5" width="3" height="0.7"/></g></svg>
<svg style="left:347px;top:462.5px;" width="13" height="12" viewBox="0 0 13 12"><rect width="13" height="12" fill="#4ea63a"/><path d="M1,1 L8.5,9.5 L7,6 L11,8Z M3,0.5 L5,0.5 L10,6Z M9,0.5 L10.5,0.5 L11.5,4Z" fill="#e4f4d8"/></svg>
<svg style="left:374px;top:463px;" width="11.3" height="10.8" viewBox="0 0 11.3 10.8"><rect x="0.5" y="0.5" width="10.3" height="9.8" fill="#2a1a05" stroke="#ff9a00" stroke-width="0.9"/><text x="2.3" y="7.8" font-family="Liberation Sans" font-size="6" font-weight="bold" fill="#ff9a00">Ai</text></svg>
<svg style="left:400px;top:463px;" width="11.3" height="10.8" viewBox="0 0 11.3 10.8"><rect x="0.5" y="0.5" width="10.3" height="9.8" fill="#2a0520" stroke="#ff3a9a" stroke-width="0.9"/><text x="2.5" y="7.8" font-family="Liberation Sans" font-size="6" font-weight="bold" fill="#ff3a9a">Id</text></svg>
<svg style="left:426px;top:462.8px;" width="12" height="12" viewBox="0 0 12 12"><circle cx="6" cy="6" r="5.6" fill="#db4437"/><path d="M6,6 L0.4,6 A5.6,5.6 0 0 0 8.8,10.85Z" fill="#0f9d58"/><path d="M6,6 L8.8,10.85 A5.6,5.6 0 0 0 11.1,3.2 L6,3.2Z" fill="#ffcd40"/><circle cx="6" cy="6" r="2.6" fill="#fff"/><circle cx="6" cy="6" r="2" fill="#4285f4"/></svg>
<div class="a" style="left:238px;top:478.2px;width:22px;height:1.8px;background:#76b9ed;"></div>
<div class="a" style="left:264.5px;top:478.2px;width:20.5px;height:1.8px;background:#76b9ed;"></div>
<div class="a" style="left:291px;top:478.2px;width:21px;height:1.8px;background:#76b9ed;"></div>
<div class="a" style="left:341px;top:478.2px;width:23.69999999999999px;height:1.8px;background:#76b9ed;"></div>
<div class="a" style="left:368px;top:478.2px;width:22px;height:1.8px;background:#76b9ed;"></div>
<div class="a" style="left:421.5px;top:478.2px;width:21.19999999999999px;height:1.8px;background:#76b9ed;"></div>
<svg style="left:619px;top:465px;" width="9" height="9" viewBox="0 0 9 9"><circle cx="3" cy="3.5" r="1.6" fill="none" stroke="#eee" stroke-width="0.8"/><path d="M0.5,8.5 Q0.5,5.5 3,5.5 Q5.5,5.5 5.5,8.5" fill="none" stroke="#eee" stroke-width="0.8"/><circle cx="6.5" cy="2" r="1.3" fill="none" stroke="#eee" stroke-width="0.7"/><path d="M5,5 Q6.5,4 8.5,6" fill="none" stroke="#eee" stroke-width="0.7"/></svg>
<svg style="left:639px;top:467px;" width="6" height="4" viewBox="0 0 6 4"><path d="M0.3,3.7 L3,0.7 L5.7,3.7" fill="none" stroke="#eee" stroke-width="0.9"/></svg>
<svg style="left:652px;top:465.5px;" width="8" height="8" viewBox="0 0 8 8"><rect x="0.5" y="0.5" width="7" height="5.5" fill="none" stroke="#eee" stroke-width="0.8"/><path d="M2,7.5 H6 M4,6 V7.5" stroke="#eee" stroke-width="0.8"/></svg>
<svg style="left:664px;top:465.5px;" width="9" height="8" viewBox="0 0 9 8"><path d="M0.5,2.8 H2 L4.2,0.7 V7.3 L2,5.2 H0.5Z" fill="none" stroke="#eee" stroke-width="0.8"/><path d="M5.5,2.5 Q6.5,4 5.5,5.5 M6.8,1.5 Q8.5,4 6.8,6.5" fill="none" stroke="#eee" stroke-width="0.7"/></svg>
<div class="t" style="left:677.3px;top:464.3px;font-size:10.3px;color:#e8e8e8;">A</div>
<svg style="left:692px;top:465px;" width="8" height="9" viewBox="0 0 8 9"><rect x="0.3" y="0.3" width="8" height="8" fill="#d8d8d8"/><path d="M1.5,3 H7 M1.5,5 L4,2 L6.5,6.5 M2,7 H6" stroke="#555" stroke-width="0.7" fill="none"/></svg>
<div class="t" style="left:709.4px;top:462.3px;font-size:6.6px;color:#eee;;transform:scaleX(0.943);transform-origin:0 0">12:12 AM</div>
<div class="t" style="left:707.2px;top:470.1px;font-size:6.6px;color:#eee;;transform:scaleX(0.938);transform-origin:0 0">10/29/2018</div>
<svg style="left:746px;top:465px;" width="10" height="9" viewBox="0 0 10 9"><path d="M0.5,0.5 H9.5 V6.5 H5 L3,8.5 V6.5 H0.5Z" fill="none" stroke="#eee" stroke-width="0.8"/></svg>
<div class="a" style="left:764.3px;top:459px;width:0.8px;height:21px;background:#5a5a5a;"></div>
</body></html>
